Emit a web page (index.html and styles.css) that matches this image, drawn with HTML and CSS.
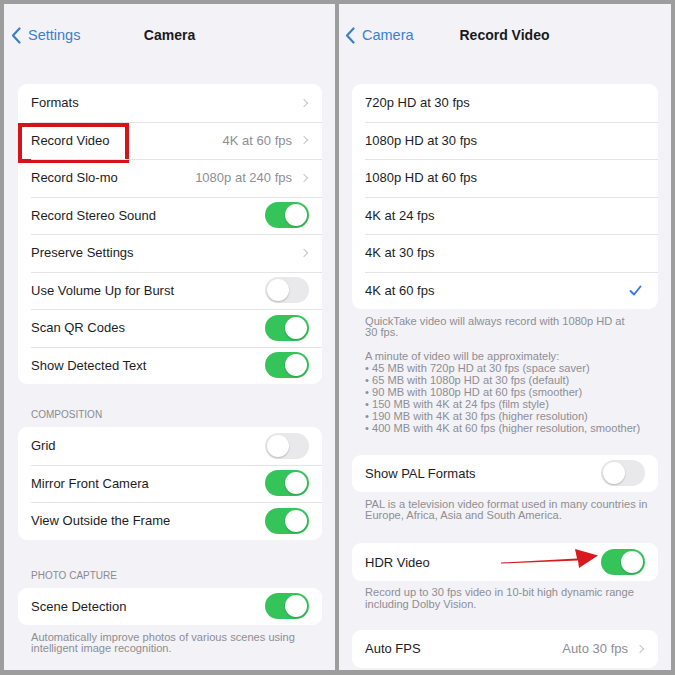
FILE: index.html
```html
<!DOCTYPE html>
<html>
<head>
<meta charset="utf-8">
<link rel="stylesheet" href="styles.css">
</head>
<body>
<div class="frame">
  <section class="panel">
    <div class="nav">
      <div class="back">
        <svg class="back-icon" width="10" height="17" viewBox="0 0 10 17"><path d="M8.5 1.5 L2 8.5 L8.5 15.5" fill="none" stroke="#3b80cc" stroke-width="2.2" stroke-linecap="round" stroke-linejoin="round"/></svg>
        <span>Settings</span>
      </div>
      <div class="title">Camera</div>
    </div>

    <div class="card first">
      <div class="row"><span class="label">Formats</span><span class="chev"></span></div>
      <div class="row"><span class="label">Record Video</span><span class="value">4K at 60 fps</span><span class="chev"></span><span class="highlight"></span></div>
      <div class="row"><span class="label">Record Slo-mo</span><span class="value">1080p at 240 fps</span><span class="chev"></span></div>
      <div class="row"><span class="label">Record Stereo Sound</span><span class="toggle on"></span></div>
      <div class="row"><span class="label">Preserve Settings</span><span class="chev"></span></div>
      <div class="row"><span class="label">Use Volume Up for Burst</span><span class="toggle"></span></div>
      <div class="row"><span class="label">Scan QR Codes</span><span class="toggle on"></span></div>
      <div class="row"><span class="label">Show Detected Text</span><span class="toggle on"></span></div>
    </div>

    <div class="section-head">COMPOSITION</div>
    <div class="card">
      <div class="row"><span class="label">Grid</span><span class="toggle"></span></div>
      <div class="row"><span class="label">Mirror Front Camera</span><span class="toggle on"></span></div>
      <div class="row"><span class="label">View Outside the Frame</span><span class="toggle on"></span></div>
    </div>

    <div class="section-head tall">PHOTO CAPTURE</div>
    <div class="card">
      <div class="row"><span class="label">Scene Detection</span><span class="toggle on"></span></div>
    </div>
    <div class="footer">Automatically improve photos of various scenes using<br>intelligent image recognition.</div>
  </section>

  <section class="panel">
    <div class="nav">
      <div class="back">
        <svg class="back-icon" width="10" height="17" viewBox="0 0 10 17"><path d="M8.5 1.5 L2 8.5 L8.5 15.5" fill="none" stroke="#3b80cc" stroke-width="2.2" stroke-linecap="round" stroke-linejoin="round"/></svg>
        <span>Camera</span>
      </div>
      <div class="title">Record Video</div>
    </div>

    <div class="card first">
      <div class="row"><span class="label">720p HD at 30 fps</span></div>
      <div class="row"><span class="label">1080p HD at 30 fps</span></div>
      <div class="row"><span class="label">1080p HD at 60 fps</span></div>
      <div class="row"><span class="label">4K at 24 fps</span></div>
      <div class="row"><span class="label">4K at 30 fps</span></div>
      <div class="row"><span class="label">4K at 60 fps</span>
        <svg class="check" width="13" height="11" viewBox="0 0 13 11"><path d="M1.5 6 L5 9.5 L11.5 1.5" fill="none" stroke="#3478f0" stroke-width="1.9" stroke-linecap="round" stroke-linejoin="round"/></svg>
      </div>
    </div>
    <div class="footer">QuickTake video will always record with 1080p HD at<br>30 fps.<br><br>A minute of video will be approximately:<br>• 45 MB with 720p HD at 30 fps (space saver)<br>• 65 MB with 1080p HD at 30 fps (default)<br>• 90 MB with 1080p HD at 60 fps (smoother)<br>• 150 MB with 4K at 24 fps (film style)<br>• 190 MB with 4K at 30 fps (higher resolution)<br>• 400 MB with 4K at 60 fps (higher resolution, smoother)</div>

    <div class="card gap-pal">
      <div class="row"><span class="label">Show PAL Formats</span><span class="toggle"></span></div>
    </div>
    <div class="footer">PAL is a television video format used in many countries in<br>Europe, Africa, Asia and South America.</div>

    <div class="card gap">
      <div class="row"><span class="label">HDR Video</span><span class="toggle on"></span>
        <svg class="arrow" width="110" height="30" viewBox="0 0 110 30"><polygon points="0,16.5 76,12.6 74,3 97,9.5 78,22 77,14.6 0,17.5" fill="#d81a1f"/></svg>
      </div>
    </div>
    <div class="footer">Record up to 30 fps video in 10-bit high dynamic range<br>including Dolby Vision.</div>

    <div class="card gap-small">
      <div class="row"><span class="label">Auto FPS</span><span class="value">Auto 30 fps</span><span class="chev"></span></div>
    </div>
  </section>
</div>
</body>
</html>
```
FILE: styles.css
```css
html, body {
  margin: 0;
  padding: 0;
}
body {
  background: #9d9d9d;
  font-family: "Liberation Sans", Arial, sans-serif;
  color: #1d1d1f;
}
.frame {
  display: flex;
  gap: 4px;
  padding: 4px;
  width: 675px;
  height: 675px;
  box-sizing: border-box;
}
.panel {
  width: 331px;
  height: 666px;
  background: #f2f2f7;
  padding: 0 13px 0 14px;
  box-sizing: border-box;
  display: flex;
  flex-direction: column;
  overflow: hidden;
}
.panel + .panel {
  width: 332px;
  padding: 0 13px;
}
.nav {
  height: 62px;
  display: grid;
  grid-template-columns: 1fr auto 1fr;
  align-items: center;
  margin: 0 -13px 0 -14px;
  padding: 0 7px;
}
.back {
  display: flex;
  align-items: center;
  gap: 7px;
  color: #3b80cc;
  font-size: 14.5px;
}
.back-icon {
  display: block;
}
.title {
  font-size: 14px;
  font-weight: bold;
  color: #1a1a1c;
}
.card {
  background: #ffffff;
  border-radius: 9px;
}
.card.first {
  margin-top: 18px;
}
.card.gap-pal {
  margin-top: 20px;
}
.card.gap {
  margin-top: 21px;
}
.card.gap-small {
  margin-top: 19px;
}
.row {
  position: relative;
  display: flex;
  align-items: center;
  height: 37.5px;
  padding: 0 13px 0 13px;
  font-size: 13px;
}
.row + .row::before {
  content: "";
  position: absolute;
  left: 13px;
  right: 0;
  top: 0;
  height: 1px;
  background: #e4e4e7;
}
.label {
  white-space: nowrap;
}
.value {
  margin-left: auto;
  color: #8e8e93;
}
.chev {
  width: 5px;
  height: 5px;
  border-right: 1.6px solid #c4c4c8;
  border-top: 1.6px solid #c4c4c8;
  transform: rotate(45deg);
  margin-left: 9px;
  margin-right: 2px;
}
.label + .chev {
  margin-left: auto;
}
.check {
  margin-left: auto;
  margin-right: 3px;
}
.toggle {
  margin-left: auto;
  position: relative;
  width: 44px;
  height: 26px;
  border-radius: 13px;
  background: #e9e9eb;
}
.toggle::after {
  content: "";
  position: absolute;
  top: 2px;
  left: 2px;
  width: 22px;
  height: 22px;
  border-radius: 50%;
  background: #ffffff;
  box-shadow: 0 1px 2px rgba(0,0,0,0.22);
}
.toggle.on {
  background: #35c45a;
}
.toggle.on::after {
  left: 20px;
}
.section-head {
  font-size: 10px;
  line-height: 12px;
  color: #8a8a8f;
  padding: 25px 0 6px 13px;
}
.section-head.tall {
  padding-top: 30px;
}
.footer {
  font-size: 11.1px;
  line-height: 11.9px;
  color: #8e8e93;
  padding: 6.5px 0 0 13px;
  white-space: nowrap;
}
.highlight {
  position: absolute;
  left: 0;
  top: 1.5px;
  width: 103px;
  height: 32px;
  border: 4px solid #d3141d;
}
.arrow {
  position: absolute;
  left: 149px;
  top: 3px;
}
```
